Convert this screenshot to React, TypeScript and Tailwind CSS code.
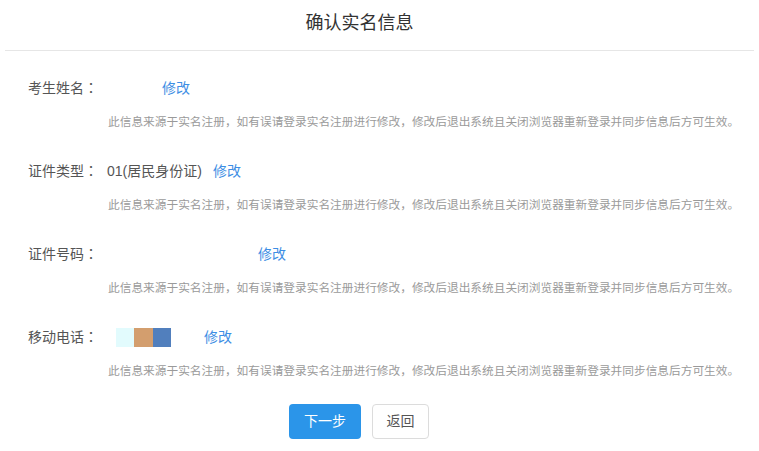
import React from "react"

const NOTE =
  "此信息来源于实名注册，如有误请登录实名注册进行修改，修改后退出系统且关闭浏览器重新登录并同步信息后方可生效。"

function Row({
  label,
  children,
  gap,
}: {
  label: string
  children?: React.ReactNode
  gap: string
}) {
  return (
    <div className="flex flex-col">
      <div className="flex h-[24px] items-center text-[14px] text-[#555]">
        <span className="w-[79px] shrink-0">
          {label}
          <span className="font-['Noto_Sans_CJK_TC',sans-serif]">：</span>
        </span>
        {children}
        <a className={`${gap} cursor-pointer text-[#3d8ee4]`}>修改</a>
      </div>
      <p className="mt-[14px] h-[16px] pl-[80px] text-[11.7px] leading-[16px] text-[#9a9a9a]">
        {NOTE}
      </p>
    </div>
  )
}

export default function App() {
  return (
    <div className="h-[451px] w-[759px] bg-white font-['Liberation_Sans','Noto_Sans_CJK_SC',sans-serif]">
      {/* header */}
      <div className="mx-[5px] h-[51px] border-b border-[#e6e6e6] pr-[40px] pt-[11px] text-center text-[18px] leading-[24px] text-[#333]">
        确认实名信息
      </div>

      <div className="flex flex-col gap-[29px] pl-[28px] pt-[25px]">
        <Row label="考生姓名" gap="ml-[55px]" />
        <Row label="证件类型" gap="ml-[11px]">
          <span>01(居民身份证)</span>
        </Row>
        <Row label="证件号码" gap="ml-[151px]" />
        <Row label="移动电话" gap="ml-[33px]">
          <div className="ml-[9px] flex h-[19px]">
            <span className="w-[18px] bg-[#e2fbfd]" />
            <span className="w-[19px] bg-[#d39e6e]" />
            <span className="w-[18px] bg-[#517fbd]" />
          </div>
        </Row>
      </div>

      <div className="mt-[25px] flex gap-[11px] pl-[289px]">
        <button className="h-[35px] w-[72px] rounded-[4px] bg-[#2b95e9] text-[14px] text-white">
          下一步
        </button>
        <button className="h-[35px] w-[57px] rounded-[4px] border border-[#dcdcdc] bg-white text-[14px] text-[#555]">
          返回
        </button>
      </div>
    </div>
  )
}
